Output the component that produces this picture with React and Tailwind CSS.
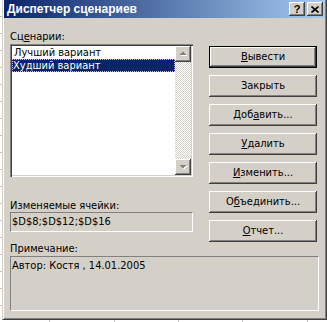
const font = "font-['DejaVu_Sans_Condensed','Liberation_Sans',Arial,sans-serif]";

const raised =
  "bg-[#d4d0c8] shadow-[inset_-1px_-1px_#404040,inset_1px_1px_#ffffff,inset_-2px_-2px_#808080]";

const Btn = ({ children, isDefault }) => {
  if (isDefault) {
    return (
      <div className="h-[22px] w-[108px] border border-black">
        <div className="flex h-full w-full items-center justify-center bg-[#d4d0c8] text-[11px] text-black shadow-[inset_-1px_-1px_#404040,inset_1px_1px_#ffffff,inset_-2px_-2px_#808080]">
          {children}
        </div>
      </div>
    );
  }
  return (
    <div className={`flex h-[22px] w-[108px] items-center justify-center text-[11px] text-black ${raised}`}>
      {children}
    </div>
  );
};

const Arrow = ({ up }) => (
  <div className={`flex h-[16px] w-[16px] shrink-0 items-center justify-center ${raised}`}>
    <svg width="9" height="6" viewBox="0 0 9 6">
      {up ? (
        <>
          <polygon points="1.5,5 8.5,5 5,1.5" fill="#ffffff" />
          <polygon points="0.5,4 7.5,4 4,0.5" fill="#808080" />
        </>
      ) : (
        <>
          <polygon points="1.5,2 8.5,2 5,5.5" fill="#ffffff" />
          <polygon points="0.5,1 7.5,1 4,4.5" fill="#808080" />
        </>
      )}
    </svg>
  </div>
);

const CapButton = ({ children }) => (
  <div className={`flex h-[14px] w-[16px] items-center justify-center ${raised}`}>{children}</div>
);

export default function App() {
  return (
    <div className={`flex h-[322px] w-[327px] flex-col overflow-hidden bg-white ${font}`}>
      <div className="flex h-[320px]">
        <div className="flex w-[2px] flex-col">
          {[0, 1, 2, 3, 4, 5, 6, 7, 8, 9, 10, 11, 12, 13, 14, 15, 16, 17, 18].map((i) => (
            <div key={i} className="h-[17px] shrink-0 border-b border-[#c0c0c0]" />
          ))}
        </div>
        <div className="flex w-[325px] flex-col border-b border-l border-r border-b-[#404040] border-l-[#d4d0c8] border-r-[#404040] bg-[#d4d0c8] shadow-[inset_1px_0_#ffffff,inset_-1px_-1px_#808080]">
          {/* title bar */}
          <div className="mx-[1px] flex h-[18px] items-center bg-[linear-gradient(to_right,#0a246a,#a6caf0)] pl-[3px] pr-[2px]">
            <span className="flex-1 font-['Liberation_Sans',Arial,sans-serif] text-[12px] font-bold leading-none text-white">
              Диспетчер сценариев
            </span>
            <div className="flex gap-[2px]">
              <CapButton>
                <span className="font-['Liberation_Sans',Arial,sans-serif] text-[11px] font-bold leading-none text-black">?</span>
              </CapButton>
              <CapButton>
                <svg width="8" height="7" viewBox="0 0 8 7">
                  <path d="M0.5 0.5 L7.5 6.5 M7.5 0.5 L0.5 6.5" stroke="#000" strokeWidth="1.6" />
                </svg>
              </CapButton>
            </div>
          </div>

          {/* body */}
          <div className="flex flex-col pl-[7px] pt-[12px] text-[11px] text-black">
            <div className="flex items-start">
              <div className="flex w-[183px] flex-col">
                <div className="h-[14px] leading-[13px]">
                  Сц<u>е</u>нарии:
                </div>
                <div className="flex h-[133px] bg-white p-[2px] shadow-[inset_1px_1px_#808080,inset_2px_2px_#404040,inset_-1px_-1px_#ffffff,inset_-2px_-2px_#d4d0c8]">
                  <div className="flex flex-1 flex-col">
                    <div className="h-[13px] pl-[2px] leading-[13px]">Лучший вариант</div>
                    <div className="h-[13px] bg-[#0a246a] pl-[1px] text-white outline-1 -outline-offset-1 outline-dotted outline-[#e8c070]">
                      <span className="block leading-[13px]">Худший вариант</span>
                    </div>
                  </div>
                  <div className="flex w-[16px] flex-col">
                    <Arrow up />
                    <div className="flex-1 bg-[repeating-conic-gradient(#d4d0c8_0%_25%,#ffffff_0%_50%)] bg-[length:2px_2px]" />
                    <Arrow />
                  </div>
                </div>
                <div className="mt-[22px] h-[13px] leading-[13px]">Изменяемые ячейки:</div>
                <div className="flex h-[20px] items-center border border-b-white border-l-[#808080] border-r-white border-t-[#808080] pl-[1px]">
                  $D$8;$D$12;$D$16
                </div>
              </div>

              <div className="ml-[16px] flex flex-col gap-[7px] pt-[16px]">
                <Btn isDefault>
                  <span>
                    <u>В</u>ывести
                  </span>
                </Btn>
                <Btn>Закрыть</Btn>
                <Btn>
                  <span>
                    Доб<u>а</u>вить...
                  </span>
                </Btn>
                <Btn>
                  <span>
                    <u>У</u>далить
                  </span>
                </Btn>
                <Btn>
                  <span>
                    <u>И</u>зменить...
                  </span>
                </Btn>
                <Btn>
                  <span>
                    О<u>б</u>ъединить...
                  </span>
                </Btn>
                <Btn>
                  <span>
                    <u>О</u>тчет...
                  </span>
                </Btn>
              </div>
            </div>

            <div className="h-[14px] leading-[13px]">Примечание:</div>
            <div className="h-[55px] w-[309px] border border-b-white border-l-[#808080] border-r-white border-t-[#808080] pl-[1px] pt-[2px] leading-[13px]">
              Автор: Костя , 14.01.2005
            </div>
          </div>
        </div>
      </div>
      <div className="flex h-[2px] pl-[2px]">
        {[48, 65, 64, 64, 65].map((w, i) => (
          <div key={i} className="shrink-0 border-r border-[#c0c0c0]" style={{ width: w }} />
        ))}
      </div>
    </div>
  );
}
